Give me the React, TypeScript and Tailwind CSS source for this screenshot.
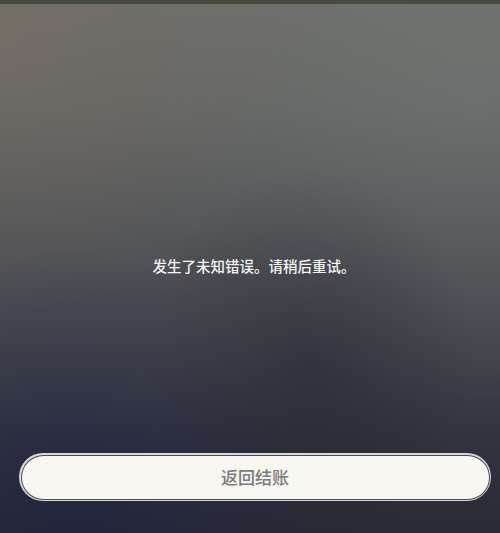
// ─── Error Screen ─────────────────────────────────────────────────────────────
const FONT = { fontFamily: '"Noto Sans CJK SC", "Noto Sans", sans-serif' }

export default function App() {
  return (
    <div
      className="relative flex h-[533px] w-[500px] flex-col overflow-hidden bg-[linear-gradient(180deg,#6c6d6a_0%,#646664_20%,#55575a_42%,#45474d_62%,#32333e_82%,#292a36_100%)]"
      style={FONT}
    >
      {/* screen glare / tint overlays */}
      <div className="pointer-events-none absolute inset-0 bg-[radial-gradient(ellipse_at_0%_8%,rgba(135,115,95,0.3),transparent_40%)]" />
      <div className="pointer-events-none absolute inset-0 bg-[radial-gradient(ellipse_at_95%_15%,rgba(125,130,128,0.3),transparent_50%)]" />
      <div className="pointer-events-none absolute inset-0 bg-[radial-gradient(ellipse_at_62%_68%,rgba(25,25,38,0.35),transparent_38%)]" />
      <div className="pointer-events-none absolute inset-0 bg-[radial-gradient(ellipse_at_15%_100%,rgba(20,30,70,0.4),transparent_38%)]" />

      {/* top bezel strip */}
      <div className="relative h-[4px] w-full bg-[#474a3e]" />

      {/* Message */}
      <div className="relative flex justify-center pl-[8px] pt-[252px]">
        <p className="text-[14.5px] font-medium leading-[20px] text-[#f4f4f4]">发生了未知错误。请稍后重试。</p>
      </div>

      {/* Button */}
      <div className="relative mt-[177px] pl-[19px] pr-[9px]">
        <div className="rounded-full bg-[#d8d8d8] p-[1.5px]">
          <div className="rounded-full bg-[#4b4c52] p-[1px]">
            <button className="flex h-[43px] w-full items-center justify-center rounded-full bg-[#f8f6f1] text-[17px] font-medium text-[#7b7b7b]">
              返回结账
            </button>
          </div>
        </div>
      </div>
    </div>
  )
}
